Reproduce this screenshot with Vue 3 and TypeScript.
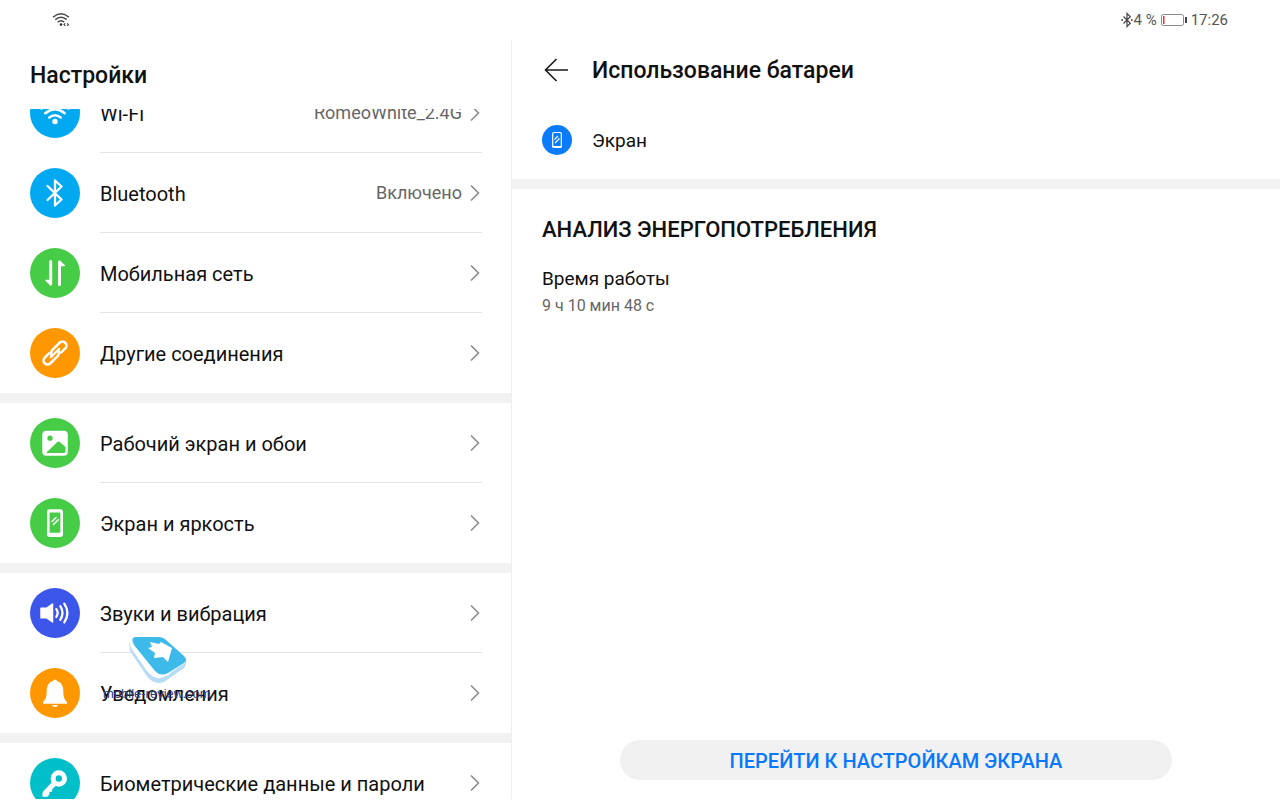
<script setup lang="ts">
type IconName = 'wifi' | 'bluetooth' | 'mobile' | 'link' | 'image' | 'screen' | 'sound' | 'bell' | 'key'

interface Item {
  label: string
  icon: IconName
  color: string
  value?: string
}

const groups: Item[][] = [
  [
    { label: 'Wi-Fi', icon: 'wifi', color: '#03a9f0', value: 'RomeoWhite_2.4G' },
    { label: 'Bluetooth', icon: 'bluetooth', color: '#03a9f0', value: 'Включено' },
    { label: 'Мобильная сеть', icon: 'mobile', color: '#47cc47' },
    { label: 'Другие соединения', icon: 'link', color: '#ff9800' },
  ],
  [
    { label: 'Рабочий экран и обои', icon: 'image', color: '#47cc47' },
    { label: 'Экран и яркость', icon: 'screen', color: '#47cc47' },
  ],
  [
    { label: 'Звуки и вибрация', icon: 'sound', color: '#3d56ea' },
    { label: 'Уведомления', icon: 'bell', color: '#ff9800' },
  ],
  [{ label: 'Биометрические данные и пароли', icon: 'key', color: '#00bfc9' }],
]
</script>

<template>
  <div class="page">
    <header class="status">
      <svg class="status-wifi" viewBox="0 0 18 16" fill="none" stroke="#444" stroke-width="1.4" aria-hidden="true">
        <path d="M1 5.2Q9-1.8 17 5.2M3.3 7.6Q9 2.8 14.7 7.6M5.7 10.1Q9 7.3 12.3 10.1" />
        <circle cx="9" cy="12.6" r="1.3" fill="#333" stroke="none" />
        <path d="M13.2 11.3 12 12.6 13.2 13.9M15.2 11.3 16.4 12.6 15.2 13.9" stroke-width="1.2" />
      </svg>
      <div class="status-right">
        <svg class="status-bt" viewBox="0 0 12 16" fill="none" stroke="#444" stroke-width="1.2" aria-hidden="true">
          <path d="M2.5 4.5 9.3 11.2 6 14.5V1.5L9.3 4.8 2.5 11.5" />
          <circle cx="1.2" cy="8" r="0.9" fill="#444" stroke="none" />
          <circle cx="10.8" cy="8" r="0.9" fill="#444" stroke="none" />
        </svg>
        <span>4 %</span>
        <svg class="battery" viewBox="0 0 28 14" aria-hidden="true">
          <rect x="1.5" y="1.5" width="22" height="11" rx="2" fill="#fff" stroke="#8a8a8a" />
          <rect x="3" y="3" width="1.5" height="8" fill="#fa2a2d" />
          <rect x="25" y="4" width="2" height="6" fill="#444" />
        </svg>
        <time>17:26</time>
      </div>
    </header>

    <div class="panes">
      <nav class="side" aria-label="Настройки">
        <h1 class="side-title">Настройки</h1>
        <div class="scroller">
          <div class="groups">
            <ul v-for="(group, g) in groups" :key="g" class="group">
              <li v-for="item in group" :key="item.label">
                <a class="row" href="#">
                  <svg class="badge" viewBox="0 0 50 50" fill="none" stroke="#fff" stroke-linecap="round" stroke-linejoin="round" aria-hidden="true">
                    <circle cx="25" cy="25" r="25" :fill="item.color" stroke="none" />
                    <g v-if="item.icon === 'wifi'" stroke-width="2.4">
                      <path d="M11.5 20.5Q25 9.5 38.5 20.5M15.3 25.2Q25 17.3 34.7 25.2M19.3 29.5Q25 25 30.7 29.5" />
                      <circle cx="25" cy="33.5" r="2.7" fill="#fff" stroke="none" />
                    </g>
                    <path v-else-if="item.icon === 'bluetooth'" d="M17.5 18 31.5 31.5 25 37.5V12.5L31.5 18.5 17.5 32" stroke-width="2.3" />
                    <g v-else-if="item.icon === 'mobile'" stroke-width="3">
                      <path d="M20.7 13.5V36" />
                      <path d="M29.5 36.5V14" />
                      <path d="M20.7 36.7 16 32.5H20.7ZM29.5 13.3 34.2 17.5H29.5Z" fill="#fff" stroke-width="1.5" />
                    </g>
                    <g v-else-if="item.icon === 'link'" transform="translate(25 25) rotate(-45)" stroke-width="2.5">
                      <path d="M-4.5-4H-10.5A4 4 0 0 0-10.5 4H-1Q2.5 4 4 1.2" />
                      <path d="M4.5 4H10.5A4 4 0 0 0 10.5-4H1Q-2.5-4-4-1.2" />
                      <path d="M-6 0H6" stroke-width="2.2" />
                    </g>
                    <g v-else-if="item.icon === 'image'" stroke="none">
                      <rect x="12.3" y="12.7" width="25.5" height="25" rx="4" fill="#fff" />
                      <circle cx="20" cy="20.2" r="2.6" :fill="item.color" />
                      <path d="M16.3 34.8 27.3 24Q28.5 23 29.7 24L35.5 29V33Q35.5 35 33.5 35H16.5Z" :fill="item.color" />
                    </g>
                    <g v-else-if="item.icon === 'screen'">
                      <path fill="#fff" stroke="none" fill-rule="evenodd" d="M19.8 11.3H30.2Q33 11.3 33 14V36.3Q33 39 30.2 39H19.8Q17 39 17 36.3V14Q17 11.3 19.8 11.3ZM19.6 14.5V34.8H30.4V14.5Z" />
                      <path d="M22 23.5 26 19.5M23.5 26.5 28.3 21.8" stroke-width="1.6" />
                    </g>
                    <g v-else-if="item.icon === 'sound'">
                      <path d="M11 20.3H16.5L22.5 16V34L16.5 29.7H11Z" fill="#fff" stroke-width="1.5" />
                      <path d="M26.3 21.2Q29 25 26.3 28.8M30.3 18.2Q34.7 25 30.3 31.8M34.3 15.6Q40.5 25 34.3 34.4" stroke-width="2.3" />
                    </g>
                    <g v-else-if="item.icon === 'bell'" fill="#fff" stroke="none">
                      <path d="M25 11.5Q26.5 11.5 27.3 13.2C31.5 14.5 33.3 18 33.3 22.5C33.3 28.5 34.2 31 37 34V35.7H13V34C15.8 31 16.7 28.5 16.7 22.5C16.7 18 18.5 14.5 22.7 13.2Q23.5 11.5 25 11.5Z" />
                      <path d="M22 37H28Q27.5 39 25 39T22 37Z" />
                    </g>
                    <g v-else>
                      <circle cx="28.8" cy="20.5" r="5.7" stroke-width="5" />
                      <path fill="#fff" stroke="none" d="M22.5 23.5 26 27.5 22 31.5 22.3 33.5 19.5 34 19.3 36.5 17.5 38.7H13.5Q12 38.7 12.3 37L12.7 34Z" />
                    </g>
                  </svg>
                  <span class="row-body">
                    <span class="row-label">{{ item.label }}</span>
                    <span v-if="item.value" class="row-value">{{ item.value }}</span>
                    <svg class="chevron" viewBox="0 0 12 20" fill="none" stroke="#8c8c8c" stroke-width="1.6" aria-hidden="true">
                      <path d="M2 2.5 9.5 10 2 17.5" />
                    </svg>
                  </span>
                </a>
              </li>
            </ul>
          </div>
        </div>
        <div class="watermark">
          <svg viewBox="0 0 60 50" aria-hidden="true">
            <path d="M2 7 3 15 19 39Q27 50 37 46L57 32Q60 29 59 23L40 40Z" fill="#b9dcf6" />
            <path d="M3 8 4 12 20 35Q28 45 37 41L58 27V23L40 35Z" fill="#fff" />
            <path d="M9 1H31Q36 1 39 4L57 20Q61 24 57 27L41 37Q34 41 28 35L7 9Q3 1 9 1Z" fill="#3db9ea" />
            <path d="M23 6 32 8 34 6 45 12 41 26 36 21 27 22 28 17 21 12 25 11Z" fill="#fff" />
          </svg>
          <span>mobile-review.com</span>
        </div>
      </nav>

      <main class="detail">
        <div class="detail-head">
          <button class="back" type="button" aria-label="Назад">
            <svg viewBox="0 0 26 26" fill="none" stroke="#1a1a1a" stroke-width="1.6" aria-hidden="true">
              <path d="M13.5 2 2.5 13 13.5 24M2.5 13H25" />
            </svg>
          </button>
          <h2>Использование батареи</h2>
        </div>
        <div class="app">
          <svg class="app-icon" viewBox="0 0 30 30" fill="none" stroke="#fff" aria-hidden="true">
            <circle cx="15" cy="15" r="15" fill="#0a7bfd" stroke="none" />
            <rect x="10.7" y="7.5" width="8.6" height="15" rx="1" stroke-width="1.2" />
            <path d="M12.5 14.5 16 11M13 18 17.5 13.5M10.5 21.5H19.5" stroke-width="1.2" />
          </svg>
          <span>Экран</span>
        </div>
        <section class="analysis">
          <h3>АНАЛИЗ ЭНЕРГОПОТРЕБЛЕНИЯ</h3>
          <dl>
            <dt>Время работы</dt>
            <dd>9 ч 10 мин 48 с</dd>
          </dl>
        </section>
        <button class="action" type="button">ПЕРЕЙТИ К НАСТРОЙКАМ ЭКРАНА</button>
      </main>
    </div>
  </div>
</template>

<style>
body {
  margin: 0;
  background: #fff;
}
</style>

<style scoped>
.page {
  display: flex;
  flex-direction: column;
  box-sizing: border-box;
  height: 100vh;
  padding-bottom: 1px;
  background: #fff;
  color: #111;
  font-family: Roboto, "Noto Sans", sans-serif;
}
.status {
  display: flex;
  flex: none;
  align-items: center;
  justify-content: space-between;
  height: 40px;
  padding: 0 52px;
}
.status-wifi {
  width: 18px;
  height: 16px;
}
.status-right {
  display: flex;
  align-items: center;
  color: #555;
  font-size: 15px;
  line-height: 20px;
}
.status-bt {
  width: 12px;
  height: 16px;
  margin-right: 1px;
}
.battery {
  width: 28px;
  height: 14px;
  margin: 0 3px;
}
.panes {
  display: grid;
  flex: 1;
  grid-template-columns: 2fr 3fr;
  min-height: 0;
}
.side {
  position: relative;
  display: flex;
  flex-direction: column;
  box-sizing: border-box;
  min-width: 0;
  min-height: 0;
  border-right: 1px solid #efefef;
}
.side-title {
  flex: none;
  margin: 0;
  padding: 21px 30px 18px;
  font-size: 23px;
  font-weight: 500;
  line-height: 30px;
}
.scroller {
  flex: 1;
  min-height: 0;
  overflow: hidden;
}
.groups {
  margin-top: -36px;
}
.group {
  margin: 0;
  padding: 0;
  list-style: none;
}
.group + .group {
  border-top: 10px solid #f2f2f2;
}
.row {
  display: flex;
  gap: 20px;
  align-items: center;
  height: 80px;
  padding: 0 29px 0 30px;
  color: inherit;
  text-decoration: none;
}
.badge {
  flex: none;
  width: 50px;
  height: 50px;
}
.row-body {
  display: flex;
  flex: 1;
  align-items: center;
  box-sizing: border-box;
  height: 80px;
  border-bottom: 1px solid #e3e3e3;
}
li:last-child .row-body {
  border-bottom-color: transparent;
}
.row-label {
  flex: 1;
  padding-top: 2px;
  font-size: 20px;
  line-height: 24px;
}
.row-value {
  margin-right: 7px;
  color: #666;
  font-size: 18px;
  line-height: 24px;
}
.chevron {
  width: 12px;
  height: 20px;
  margin-right: 1px;
}
.watermark {
  position: absolute;
  top: 596px;
  left: 103px;
  display: flex;
  flex-direction: column;
  color: #34407f;
  font-family: "Liberation Sans", sans-serif;
  font-size: 13px;
  line-height: 16px;
  pointer-events: none;
}
.watermark svg {
  width: 60px;
  height: 50px;
  margin-left: 24px;
}
.detail {
  display: flex;
  flex-direction: column;
  min-width: 0;
}
.detail-head {
  display: flex;
  gap: 23px;
  align-items: center;
  height: 60px;
  padding: 0 31px;
}
.back {
  width: 26px;
  height: 26px;
  padding: 0;
  border: 0;
  background: none;
}
.back svg {
  display: block;
  width: 26px;
  height: 26px;
}
h2,
h3 {
  margin: 0;
  font-size: 22px;
  font-weight: 500;
  line-height: 30px;
}
h2 {
  padding-top: 2px;
  font-size: 23px;
}
.app {
  display: flex;
  gap: 20px;
  align-items: center;
  height: 79px;
  padding: 0 30px;
  border-bottom: 10px solid #f2f2f2;
  font-size: 19px;
  line-height: 24px;
}
.app span {
  padding-top: 2px;
}
.app-icon {
  width: 30px;
  height: 30px;
}
.analysis {
  flex: 1;
  padding: 26px 30px 0;
}
dl {
  margin: 21px 0 0;
}
dt {
  font-size: 19px;
  line-height: 26px;
}
dd {
  margin: 0;
  color: #666;
  font-size: 16px;
  line-height: 28px;
}
.action {
  align-self: center;
  width: 72%;
  height: 40px;
  margin-bottom: 19px;
  padding: 2px 0 0;
  border: 0;
  border-radius: 20px;
  background: #f1f1f1;
  color: #0a78fa;
  font-family: inherit;
  font-size: 20px;
  font-weight: 500;
}
</style>
